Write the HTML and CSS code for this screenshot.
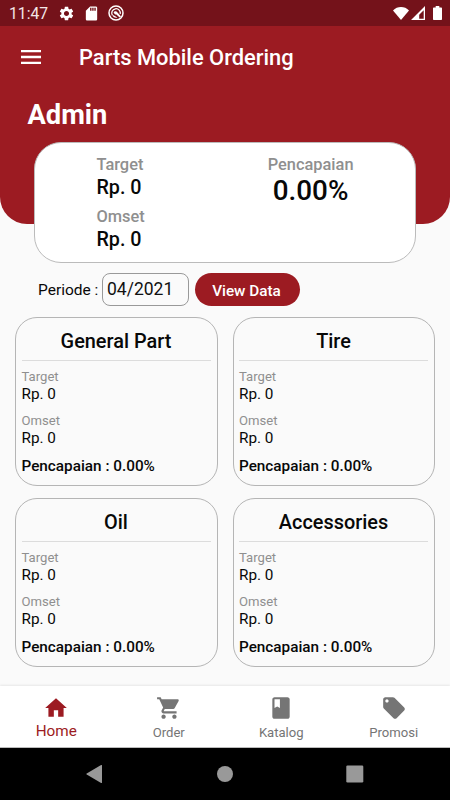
FILE: index.html
```html
<!DOCTYPE html>
<html lang="en">
<head>
    <meta charset="UTF-8">
    <meta name="viewport" content="width=device-width, initial-scale=1.0">
    <title>Parts Mobile Ordering</title>
    <link rel="stylesheet" href="styles.css">
</head>
<body>
    <!-- Status Bar -->
    <div class="status-bar">
        <span class="time">11:47</span>
        <svg class="status-icon gear" viewBox="0 0 24 24"><path d="M19.14 12.94c.04-.3.06-.61.06-.94 0-.32-.02-.64-.07-.94l2.03-1.58c.18-.14.23-.41.12-.61l-1.92-3.32c-.12-.22-.37-.29-.59-.22l-2.39.96c-.5-.38-1.03-.7-1.62-.94l-.36-2.54c-.04-.24-.24-.41-.48-.41h-3.84c-.24 0-.43.17-.47.41l-.36 2.54c-.59.24-1.13.57-1.62.94l-2.39-.96c-.22-.08-.47 0-.59.22L2.74 8.87c-.12.21-.08.47.12.61l2.03 1.58c-.05.3-.09.63-.09.94s.02.64.07.94l-2.03 1.58c-.18.14-.23.41-.12.61l1.92 3.32c.12.22.37.29.59.22l2.39-.96c.5.38 1.03.7 1.62.94l.36 2.54c.05.24.24.41.48.41h3.84c.24 0 .44-.17.47-.41l.36-2.54c.59-.24 1.13-.56 1.62-.94l2.39.96c.22.08.47 0 .59-.22l1.92-3.32c.12-.22.07-.47-.12-.61l-2.01-1.58zM12 15.6c-1.98 0-3.6-1.62-3.6-3.6s1.62-3.6 3.6-3.6 3.6 1.62 3.6 3.6-1.62 3.6-3.6 3.6z"/></svg>
        <svg class="status-icon sd" viewBox="0 0 24 24"><path d="M18 2h-8L4.02 8 4 20c0 1.1.9 2 2 2h12c1.1 0 2-.9 2-2V4c0-1.100-.9-2-2-2zm-6 6h-2V4h2v4zm3 0h-2V4h2v4zm3 0h-2V4h2v4z"/></svg>
        <svg class="status-icon app" viewBox="0 0 16 16">
            <circle cx="8" cy="8" r="7" fill="none" stroke="#fff" stroke-width="1.5"/>
            <path d="M4.300 10.200A4.300 4.300 0 1 1 12.200 9" fill="none" stroke="#fff" stroke-width="1.300"/>
            <path d="M5.600 7.400C6.400 5.800 8.400 5.800 9.300 7.200L13 11.400 11.600 12.600 8.400 9.400C7.400 9.600 6.200 8.800 5.600 7.400z"/>
            <path d="M4.200 9.400 9.400 12.400C7.400 13.200 4.800 12.200 4.200 9.400z"/>
        </svg>
        <div class="status-right">
            <svg class="wifi" viewBox="0 0 16 13"><path d="M8 13 0 3.400C2.200 1.200 5 0 8 0s5.800 1.200 8 3.400z"/></svg>
            <svg class="signal" viewBox="0 0 14 14"><path fill-rule="evenodd" d="M14 0v14H0zM12.700 4.200 8.200 8.700v4h4.500z"/></svg>
            <svg class="battery" viewBox="0 0 9 14"><path d="M2.700 0h3.600v1.400H8c.6 0 1 .4 1 1V13c0 .6-.4 1-1 1H1c-.6 0-1-.4-1-1V2.400c0-.6.4-1 1-1h1.700z"/></svg>
        </div>
    </div>

    <!-- Header Section -->
    <div class="header">
        <div class="app-bar">
            <svg class="menu" viewBox="0 0 20 14"><path d="M0 0h20v2.300H0zM0 5.850h20v2.300H0zM0 11.700h20V14H0z"/></svg>
            <h1>Parts Mobile Ordering</h1>
        </div>
        <h2>Admin</h2>
    </div>

    <!-- Summary Card -->
    <div class="summary">
        <div class="summary-col">
            <p class="label">Target</p>
            <p class="amount">Rp. 0</p>
            <p class="label">Omset</p>
            <p class="amount">Rp. 0</p>
        </div>
        <div class="summary-col center">
            <p class="label">Pencapaian</p>
            <p class="percent">0.00%</p>
        </div>
    </div>

    <!-- Periode Filter -->
    <div class="filter">
        <label for="periode">Periode :</label>
        <input type="text" id="periode" value="04/2021">
        <button>View Data</button>
    </div>

    <!-- Part Categories -->
    <div class="cards">
        <div class="card">
            <h3>General Part</h3>
            <p class="label">Target</p>
            <p class="value">Rp. 0</p>
            <p class="label">Omset</p>
            <p class="value">Rp. 0</p>
            <p class="result">Pencapaian : 0.00%</p>
        </div>
        <div class="card">
            <h3>Tire</h3>
            <p class="label">Target</p>
            <p class="value">Rp. 0</p>
            <p class="label">Omset</p>
            <p class="value">Rp. 0</p>
            <p class="result">Pencapaian : 0.00%</p>
        </div>
        <div class="card">
            <h3>Oil</h3>
            <p class="label">Target</p>
            <p class="value">Rp. 0</p>
            <p class="label">Omset</p>
            <p class="value">Rp. 0</p>
            <p class="result">Pencapaian : 0.00%</p>
        </div>
        <div class="card">
            <h3>Accessories</h3>
            <p class="label">Target</p>
            <p class="value">Rp. 0</p>
            <p class="label">Omset</p>
            <p class="value">Rp. 0</p>
            <p class="result">Pencapaian : 0.00%</p>
        </div>
    </div>

    <!-- Bottom Navigation -->
    <div class="bottom-nav">
        <a class="nav-item active">
            <svg viewBox="0 0 24 24"><path d="M10 20v-6h4v6h5v-8h3L12 3 2 12h3v8z"/></svg>
            <span>Home</span>
        </a>
        <a class="nav-item">
            <svg viewBox="0 0 24 24"><path d="M7 18c-1.100 0-1.990.9-1.990 2S5.900 22 7 22s2-.9 2-2-.9-2-2-2zM1 2v2h2l3.600 7.590-1.350 2.450c-.16.28-.25.61-.25.96 0 1.100.9 2 2 2h12v-2H7.420c-.14 0-.25-.11-.25-.25l.03-.12.9-1.630h7.450c.75 0 1.410-.41 1.750-1.030l3.580-6.490c.08-.14.12-.31.12-.48 0-.55-.45-1-1-1H5.210l-.94-2H1zm16 16c-1.100 0-1.990.9-1.990 2s.89 2 1.990 2 2-.9 2-2-.9-2-2-2z"/></svg>
            <span>Order</span>
        </a>
        <a class="nav-item">
            <svg viewBox="0 0 24 24"><path d="M18 2H6c-1.100 0-2 .9-2 2v16c0 1.100.9 2 2 2h12c1.100 0 2-.9 2-2V4c0-1.100-.9-2-2-2zM6 4h5v8l-2.500-1.500L6 12V4z"/></svg>
            <span>Katalog</span>
        </a>
        <a class="nav-item">
            <svg viewBox="0 0 24 24"><path d="M21.410 11.580l-9-9C12.050 2.220 11.550 2 11 2H4c-1.100 0-2 .9-2 2v7c0 .55.22 1.050.59 1.420l9 9c.36.36.86.58 1.410.58.55 0 1.050-.22 1.410-.59l7-7c.37-.36.59-.86.59-1.410 0-.55-.23-1.060-.59-1.420zM5.500 7C4.670 7 4 6.330 4 5.500S4.670 4 5.500 4 7 4.670 7 5.500 6.330 7 5.500 7z"/></svg>
            <span>Promosi</span>
        </a>
    </div>

    <!-- Android System Buttons -->
    <div class="system-nav">
        <svg viewBox="0 0 18 18"><path d="M16 .4v17.200c0 .4-.5.6-.9.4L.7 9.600c-.5-.3-.5-.9 0-1.200L15.100 0c.4-.2.9 0 .9.4z"/></svg>
        <svg viewBox="0 0 18 18"><circle cx="9" cy="9" r="8"/></svg>
        <svg viewBox="0 0 18 18"><rect x=".3" y=".5" width="17" height="17" rx="1.200"/></svg>
    </div>
</body>
</html>
```
FILE: styles.css
```css
* {
    margin: 0;
    padding: 0;
    box-sizing: border-box;
    font-family: Roboto, sans-serif;
}

body {
    width: 450px;
    height: 800px;
    background-color: #fafafa;
    color: #080808;
    display: flex;
    flex-direction: column;
    overflow: hidden;
}

svg {
    display: block;
    fill: #fff;
}

/* Status bar */
.status-bar {
    height: 26px;
    flex-shrink: 0;
    background: #74121a;
    display: flex;
    align-items: center;
    padding: 0 8px 0 9px;
}

.time {
    width: 49px;
    font-size: 15.7px;
    line-height: 26px;
    color: #f3e6e7;
    padding-top: 2px;
}

.status-icon {
    width: 16px;
    height: 16px;
}

.gear {
    width: 17px;
    height: 17px;
}

.sd {
    width: 17px;
    height: 17px;
    margin-left: 8px;
}

.app {
    margin-left: 7.5px;
}

.status-right {
    margin-left: auto;
    display: flex;
    align-items: center;
}

.wifi {
    width: 16px;
    height: 13px;
}

.signal {
    width: 14px;
    height: 14px;
    margin-left: 2px;
}

.battery {
    width: 9px;
    height: 14px;
    margin-left: 8px;
}

/* Header */
.header {
    height: 198px;
    flex-shrink: 0;
    background: #9c1b22;
    border-radius: 0 0 27px 27px;
    color: #fff;
}

.app-bar {
    height: 62px;
    display: flex;
    align-items: center;
    padding-left: 20.5px;
}

.menu {
    width: 20px;
    height: 14px;
}

.header h1 {
    font-size: 21.9px;
    font-weight: 500;
    margin-left: 38.5px;
    padding-top: 1px;
}

.header h2 {
    font-size: 27.3px;
    font-weight: 700;
    line-height: 32px;
    padding: 11px 0 0 27.5px;
}

/* Summary card overlaps the header */
.summary {
    height: 121px;
    flex-shrink: 0;
    margin: -82px 34px 0;
    padding-top: 12px;
    background: #fff;
    border: 1px solid #bbb;
    border-radius: 27px;
    display: flex;
    justify-content: space-around;
}

.center {
    text-align: center;
}

.summary .label {
    font-size: 16.4px;
    font-weight: 500;
    line-height: 20px;
    color: #8f8f8f;
}

.amount {
    font-size: 19.7px;
    font-weight: 500;
    line-height: 26px;
    margin-bottom: 6px;
}

.percent {
    font-size: 27.8px;
    font-weight: 500;
    line-height: 32px;
}

/* Periode filter */
.filter {
    height: 33px;
    flex-shrink: 0;
    margin: 10px 0 0 38px;
    display: flex;
    align-items: center;
}

.filter label {
    width: 64px;
    font-size: 15.5px;
    padding-top: 1px;
}

.filter input {
    width: 87px;
    height: 33px;
    padding: 0 0 2px 4px;
    font-size: 17.5px;
    color: #111;
    background: transparent;
    border: 1px solid #999;
    border-radius: 8px;
}

.filter button {
    width: 105px;
    height: 33px;
    margin-left: 6px;
    padding: 2px 2px 0 0;
    font-size: 15.3px;
    font-weight: 500;
    color: #fff;
    background: #9c1b22;
    border: none;
    border-radius: 17px;
}

/* Category cards */
.cards {
    display: grid;
    grid-template-columns: 202.5px 202.5px;
    grid-auto-rows: 169px;
    gap: 11.5px 15px;
    margin: 11px 0 0 15px;
}

.card {
    border: 1px solid #b5b5b5;
    border-radius: 22px;
    padding: 0 6px 0 5.5px;
}

.card h3 {
    height: 43px;
    font-size: 19.9px;
    font-weight: 500;
    line-height: 48px;
    text-align: center;
    border-bottom: 1px solid #dcdcdc;
    margin-bottom: 8px;
}

.card .label {
    font-size: 13.1px;
    line-height: 16px;
    color: #8f8f8f;
}

.value {
    font-size: 15.3px;
    line-height: 18px;
    margin-bottom: 10px;
}

.result {
    font-size: 15.3px;
    font-weight: 500;
    line-height: 18px;
}

/* Bottom navigation */
.bottom-nav {
    height: 62px;
    flex-shrink: 0;
    margin-top: auto;
    background: #fff;
    box-shadow: 0 -1px 2px rgba(0, 0, 0, 0.08);
    border-bottom: 1px solid #bbb;
    display: flex;
}

.nav-item {
    flex: 1;
    display: flex;
    flex-direction: column;
    align-items: center;
    padding-top: 9px;
    font-size: 13.1px;
    line-height: 20px;
    color: #757575;
}

.nav-item svg {
    width: 26px;
    height: 26px;
    fill: #757575;
}

.nav-item span {
    margin-top: 2px;
}

.nav-item.active {
    color: #9c1b22;
    font-size: 15.3px;
}

.nav-item.active svg {
    fill: #9c1b22;
}

.nav-item.active span {
    margin-top: 0;
}

/* System buttons */
.system-nav {
    height: 52px;
    flex-shrink: 0;
    background: #000;
    display: flex;
    justify-content: center;
    align-items: center;
    gap: 112px;
}

.system-nav svg {
    width: 18px;
    height: 18px;
    fill: #999;
}
```
